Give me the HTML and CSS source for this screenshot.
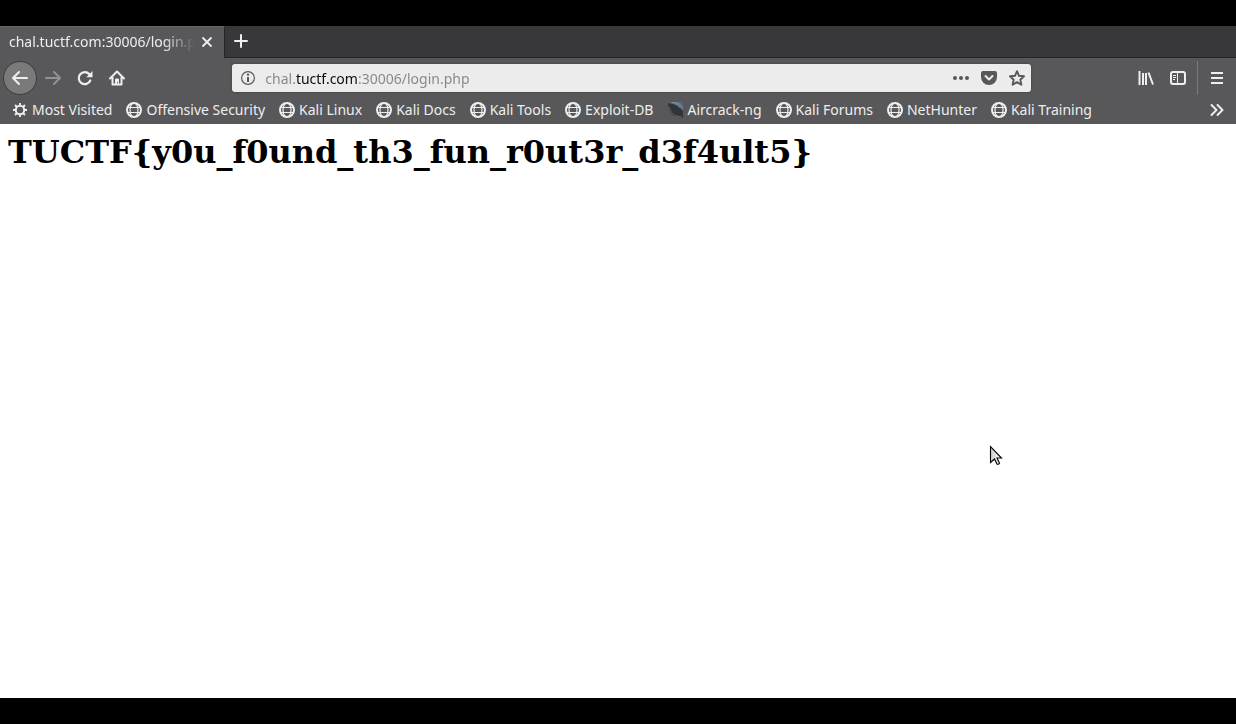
FILE: index.html
```
<!DOCTYPE html>
<html lang="en">
<head>
<meta charset="utf-8">
<title>chal.tuctf.com:30006/login.php</title>
<link rel="stylesheet" href="styles.css">
</head>
<body>
<svg class="defs" aria-hidden="true">
  <symbol id="globe" viewBox="0 0 16 16">
    <g fill="none" stroke="currentColor"><circle cx="8" cy="8" r="7" stroke-width="2"/><ellipse cx="8" cy="8" rx="4" ry="7" stroke-width="1.2"/><path d="M2 5.500h12M2 10.500h12" stroke-width="1.2"/></g>
  </symbol>
</svg>
<header class="browser">
  <div class="tabs">
    <div class="tab">
      <span class="tab-title">chal.tuctf.com:30006/login.php</span>
      <button class="tab-close" aria-label="Close tab"><svg width="16" height="16" viewBox="0 0 16 16"><path d="M4 4l8 8M12 4l-8 8" fill="none" stroke="currentColor" stroke-width="1.8" stroke-linecap="round"/></svg></button>
    </div>
    <button class="tab-new" aria-label="New tab"><svg width="16" height="16" viewBox="0 0 16 16"><path d="M8 2v12M2 8h12" fill="none" stroke="currentColor" stroke-width="2" stroke-linecap="round"/></svg></button>
  </div>
  <nav class="toolbar" aria-label="Navigation">
    <button class="tool back" aria-label="Back"><svg width="16" height="16" viewBox="0 0 16 16"><path d="M15 8H1.500M7 2L1 8l6 6" fill="none" stroke="currentColor" stroke-width="2" stroke-linecap="round" stroke-linejoin="round"/></svg></button>
    <button class="tool forward" aria-label="Forward" disabled><svg width="16" height="16" viewBox="0 0 16 16"><path d="M1 8h13.500M9 2l6 6-6 6" fill="none" stroke="currentColor" stroke-width="2" stroke-linecap="round" stroke-linejoin="round"/></svg></button>
    <button class="tool" aria-label="Reload"><svg width="16" height="16" viewBox="0 0 16 16"><path d="M12.300 4.200A6 6 0 1 0 13.300 10.500" fill="none" stroke="currentColor" stroke-width="2.200" stroke-linecap="round"/><path d="M15.500 1v6.200H9.300z" fill="currentColor"/></svg></button>
    <button class="tool" aria-label="Home"><svg width="16" height="16" viewBox="0 0 16 16"><path d="M1 8.500L8 1.500l7 7M3.500 7v7.500h9V7" fill="none" stroke="currentColor" stroke-width="2" stroke-linecap="round" stroke-linejoin="round"/><path d="M6 15V9.500Q6 8.500 7 8.500h2q1 0 1 1V15H8.800v-3H8v3z" fill="currentColor"/></svg></button>
    <div class="spring"></div>
    <div class="urlbar">
      <button class="url-tool" aria-label="Site information"><svg width="16" height="16" viewBox="0 0 16 16"><circle cx="8" cy="8" r="6.400" fill="none" stroke="currentColor" stroke-width="1.200"/><path d="M8 7v5" stroke="currentColor" stroke-width="2"/><circle cx="8" cy="4.600" r="1.200" fill="currentColor"/></svg></button>
      <input class="url" type="text" aria-label="Address" value="chal.tuctf.com:30006/login.php">
      <button class="url-tool" aria-label="Page actions"><svg width="16" height="16" viewBox="0 0 16 16" fill="currentColor"><circle cx="2" cy="8" r="2"/><circle cx="8" cy="8" r="2"/><circle cx="14" cy="8" r="2"/></svg></button>
      <button class="url-tool" aria-label="Save to Pocket"><svg width="16" height="16" viewBox="0 0 16 16"><path d="M2 1h12q2 0 2 2v4a8 8 0 0 1-16 0V3q0-2 2-2z" fill="currentColor"/><path d="M4.500 6L8 9.500 11.500 6" fill="none" stroke="#ececed" stroke-width="2" stroke-linecap="round" stroke-linejoin="round"/></svg></button>
      <button class="url-tool" aria-label="Bookmark this page"><svg width="16" height="16" viewBox="0 0 16 16"><path d="M8 1.200l2 4.600 5 .5-3.700 3.400 1.100 5L8 12.100l-4.400 2.600 1.100-5L1 6.300l5-.5z" fill="none" stroke="currentColor" stroke-width="1.900" stroke-linejoin="round"/></svg></button>
    </div>
    <div class="spring"></div>
    <button class="tool" aria-label="Library"><svg width="16" height="16" viewBox="0 0 16 16"><path d="M1.500 1v14M5 3v12M8 3v12M10.500 2.500l4.500 12" fill="none" stroke="currentColor" stroke-width="2"/></svg></button>
    <button class="tool" aria-label="Sidebars"><svg width="16" height="16" viewBox="0 0 16 16"><rect x="1" y="2" width="14" height="12" rx="2" fill="none" stroke="currentColor" stroke-width="2"/><path d="M7.500 2v12M3 5.500h3M3 7.500h3M3 9.500h2" stroke="currentColor"/></svg></button>
    <button class="tool menu" aria-label="Menu"><svg width="16" height="16" viewBox="0 0 16 16"><path d="M2 3h12M2 8h12M2 13h12" stroke="currentColor" stroke-width="2"/></svg></button>
  </nav>
  <nav class="bookmarks" aria-label="Bookmarks">
    <a href="#"><svg width="16" height="16" viewBox="0 0 16 16"><circle cx="8" cy="8" r="4.200" fill="none" stroke="currentColor" stroke-width="2"/><path d="M8 1v3M8 12v3M1 8h3M12 8h3M3 3l2 2M11 11l2 2M13 3l-2 2M5 11l-2 2" stroke="currentColor" stroke-width="1.800"/></svg>Most Visited</a>
    <a href="#"><svg width="16" height="16"><use href="#globe"/></svg>Offensive Security</a>
    <a href="#"><svg width="16" height="16"><use href="#globe"/></svg>Kali Linux</a>
    <a href="#"><svg width="16" height="16"><use href="#globe"/></svg>Kali Docs</a>
    <a href="#"><svg width="16" height="16"><use href="#globe"/></svg>Kali Tools</a>
    <a href="#"><svg width="16" height="16"><use href="#globe"/></svg>Exploit-DB</a>
    <a href="#"><svg width="16" height="16" viewBox="0 0 16 16"><path d="M0 0h16v16z" fill="#55677c"/><path d="M5 0q8 2 11 12" fill="none" stroke="#8fa4bb"/><path d="M9 0q5 2 7 7" fill="none" stroke="#8193a8"/><path d="M1 1q0 9 6 13l9 2V9Q11 2 1 1z" fill="#30353a"/><path d="M2 5q2 7 7 9l6 1" fill="none" stroke="#66665f"/></svg>Aircrack-ng</a>
    <a href="#"><svg width="16" height="16"><use href="#globe"/></svg>Kali Forums</a>
    <a href="#"><svg width="16" height="16"><use href="#globe"/></svg>NetHunter</a>
    <a href="#"><svg width="16" height="16"><use href="#globe"/></svg>Kali Training</a>
    <button class="more" aria-label="More bookmarks"><svg width="16" height="16" viewBox="0 0 16 16"><path d="M2.500 3l5 5-5 5M8.500 3l5 5-5 5" fill="none" stroke="currentColor" stroke-width="2" stroke-linecap="round" stroke-linejoin="round"/></svg></button>
  </nav>
</header>
<main class="page">
  <h1>TUCTF{y0u_f0und_th3_fun_r0ut3r_d3f4ult5}</h1>
  <svg class="cursor" width="14" height="22" viewBox="0 0 14 22" aria-hidden="true"><defs><linearGradient id="shade"><stop offset="0" stop-color="#ccc"/><stop offset="1" stop-color="#fff"/></linearGradient></defs><path d="M1.500 1.500v16l4-3.500 2.500 5q1.500 1 2.500-.7L8 13h4.500z" fill="url(#shade)" stroke="#000" stroke-width="1.100"/></svg>
</main>
</body>
</html>
```
FILE: styles.css
```
* {
  box-sizing: border-box;
}

body {
  margin: 0;
  min-height: 100vh;
  padding: 26px 0;
  display: flex;
  flex-direction: column;
  background: #000;
  font: 14px/20px "Noto Sans", sans-serif;
}

svg {
  display: block;
  flex: none;
}

.defs {
  position: absolute;
  width: 0;
  height: 0;
}

button {
  display: grid;
  place-items: center;
  flex: none;
  padding: 0;
  border: 0;
  background: none;
  color: inherit;
}

.browser {
  background: #58585a;
  color: #eeeeef;
}

.tabs {
  display: flex;
  height: 32px;
  background: #38383a;
  border-bottom: 1px solid #252526;
}

.tab {
  display: flex;
  align-items: center;
  width: 225px;
  height: 32px;
  padding: 0 9px 2px;
  background: #58585a;
  border-top: 1px solid #69696c;
  border-right: 1px solid #252526;
}

.tab-title {
  flex: 1;
  overflow: hidden;
  white-space: nowrap;
  mask-image: linear-gradient(to left, transparent, #000 32px);
}

.tab-close {
  width: 16px;
  height: 24px;
  margin-left: 4px;
}

.tab-new {
  width: 32px;
  padding-bottom: 1px;
}

.toolbar {
  display: flex;
  align-items: center;
  height: 40px;
  padding: 0 0 0 3px;
}

.tool {
  width: 32px;
  height: 32px;
}

.back {
  width: 34px;
  height: 34px;
  background: #7a7a7b;
  border: 1px solid #3c3c3e;
  border-radius: 50%;
}

.forward {
  color: #929294;
}

.menu {
  width: 39px;
  height: 34px;
  margin-left: 3px;
  border-left: 1px solid #7b7b7d;
}

.spring {
  flex: 10;
}

.urlbar {
  flex: 79;
  display: flex;
  align-items: center;
  gap: 12px;
  min-width: 0;
  height: 28px;
  padding: 0 6px 0 8px;
  border-radius: 3px;
  background: #ececed;
  box-shadow: 0 0 2px #353537;
  color: #58585a;
}

.url-tool {
  width: 16px;
  height: 24px;
}

.url {
  flex: 1;
  min-width: 0;
  height: 24px;
  margin-left: -3px;
  padding: 0;
  border: 0;
  outline: 0;
  font: inherit;
  background: linear-gradient(to right, #858587 31px, #0c0c0d 31px, #0c0c0d 93px, #858587 93px);
  background-clip: text;
  color: transparent;
}

.bookmarks {
  display: flex;
  align-items: center;
  gap: 14px;
  height: 26px;
  padding: 0 11px 2px 12px;
}

.bookmarks a {
  display: flex;
  align-items: center;
  gap: 4px;
  color: inherit;
  text-decoration: none;
  white-space: nowrap;
}

.more {
  margin-left: auto;
}

.page {
  position: relative;
  flex: 1;
  background: #fff;
  color: #000;
}

.page h1 {
  margin: 8px;
  font: bold 32px/40px "DejaVu Serif", serif;
}

.cursor {
  position: absolute;
  left: 989px;
  top: 321px;
}
```
